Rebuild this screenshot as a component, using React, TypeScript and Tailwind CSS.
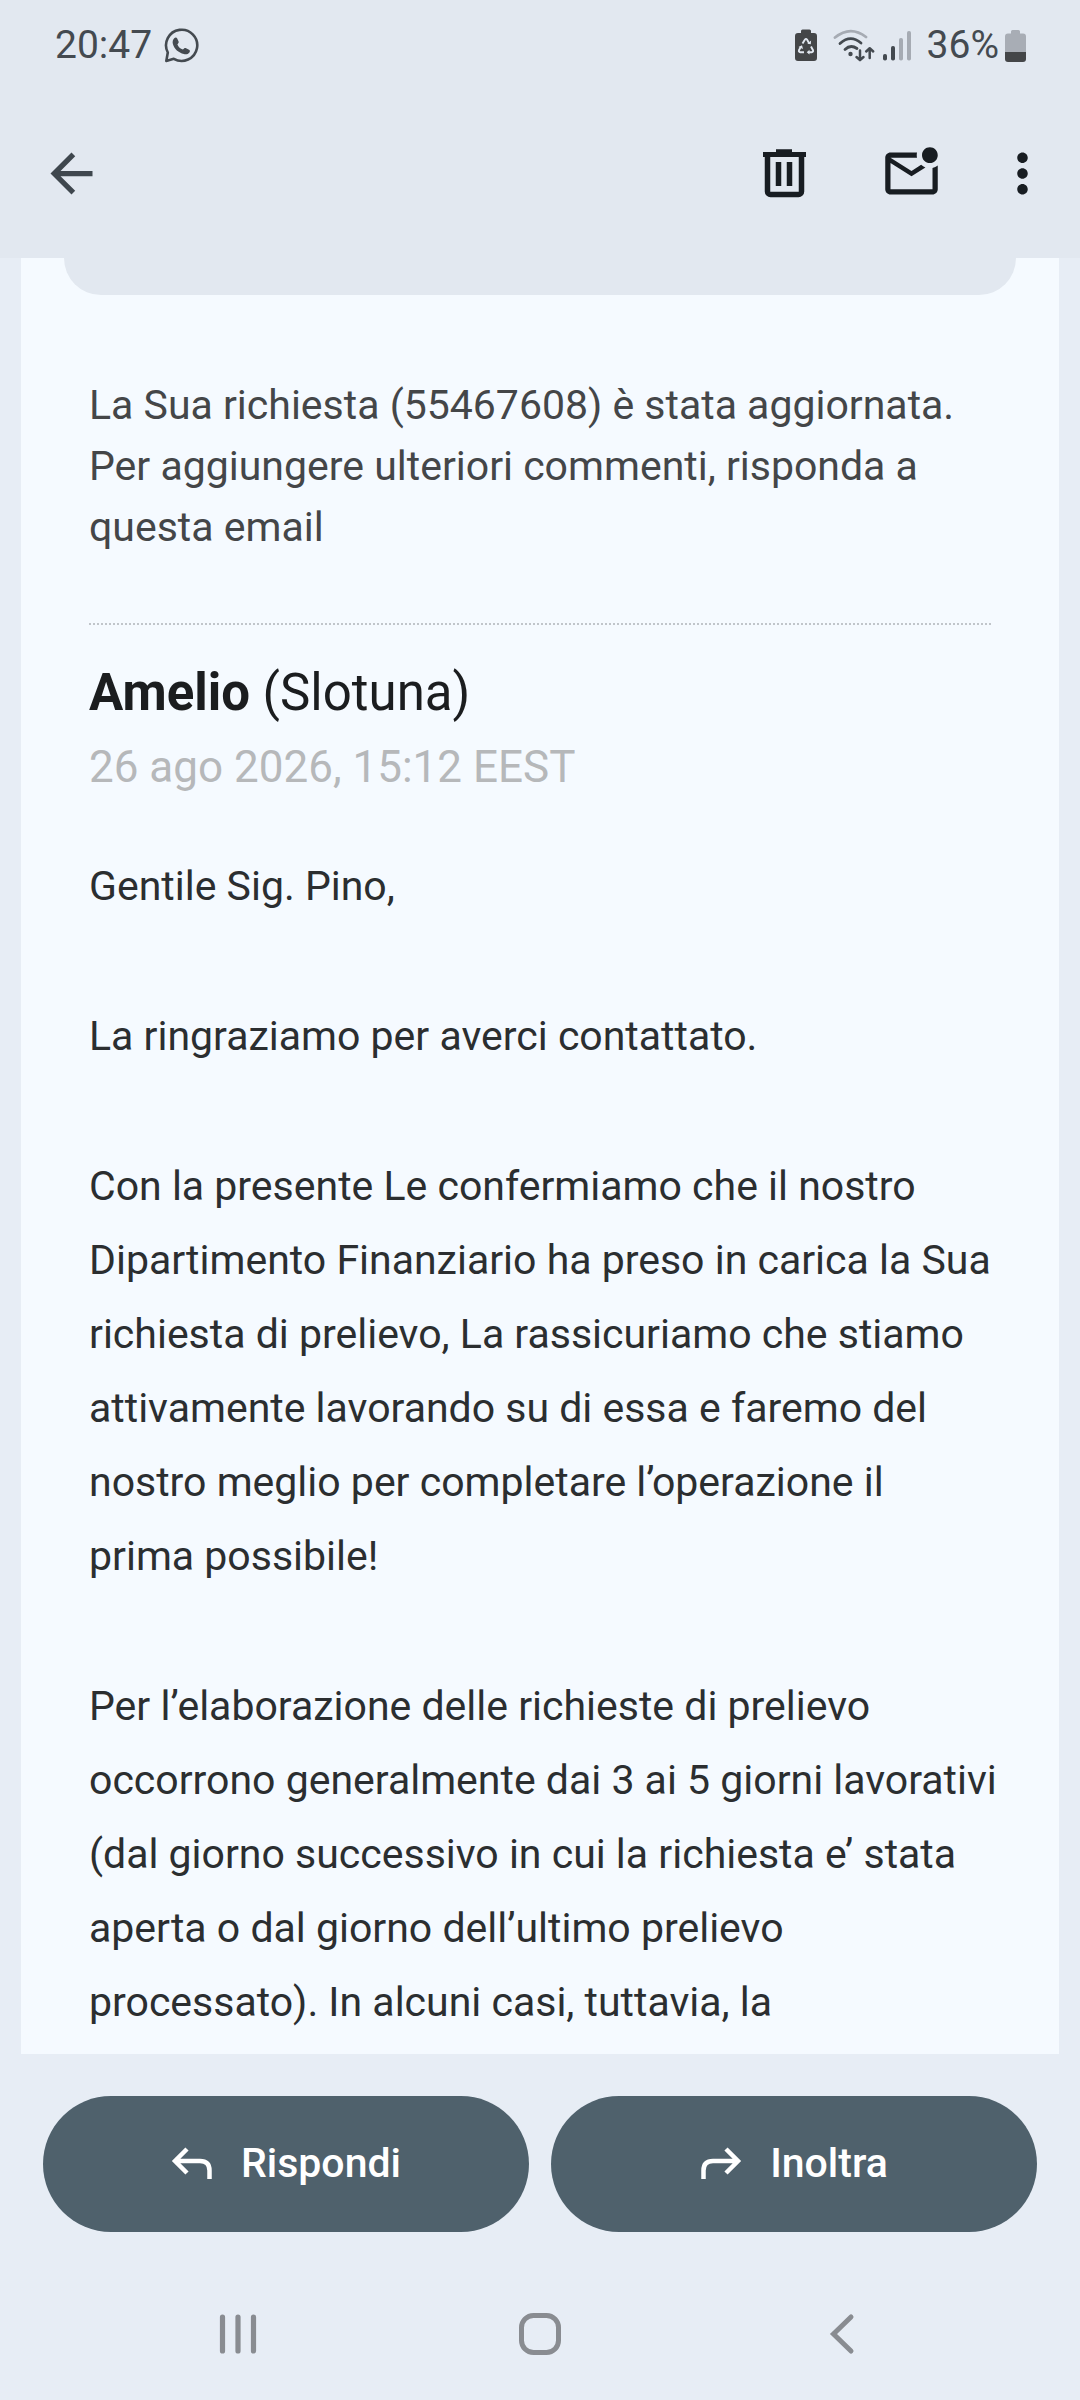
import React from 'react'

const intro = 'La Sua richiesta (55467608) è stata aggiornata. Per aggiungere ulteriori commenti, risponda a questa email'

const paragraphs = [
  'Gentile Sig. Pino,',
  'La ringraziamo per averci contattato.',
  'Con la presente Le confermiamo che il nostro Dipartimento Finanziario ha preso in carica la Sua richiesta di prelievo, La rassicuriamo che stiamo attivamente lavorando su di essa e faremo del nostro meglio per completare l’operazione il\nprima possibile!',
  'Per l’elaborazione delle richieste di prelievo occorrono generalmente dai 3 ai 5 giorni lavorativi (dal giorno successivo in cui la richiesta e’ stata aperta o dal giorno dell’ultimo prelievo processato). In alcuni casi, tuttavia, la',
]

function WhatsAppIcon() {
  return (
    <svg width="36" height="36" viewBox="0 0 36 36" fill="none">
      <path d="M2.300 34l1.500-8.500A15.600 15.600 0 1 1 9.800 31.800z" stroke="#444a50" strokeWidth="2.600" strokeLinejoin="round" />
      <path
        d="M10.200 11.200c1-1 2.500-1 3 .2l1.400 3.200c.4 1-.1 1.700-1.200 2.800 1 2.400 3 4.300 5.500 5.200 1.200-1.400 1.800-1.900 2.700-1.500l3.400 1.600c1.200.6 1.100 1.700.4 2.700-1.100 1.600-3.400 2.200-5.500 1.700-5.400-1.300-9.700-5-11-10-.6-2.300-.1-4.500 1.300-5.900z"
        fill="#444a50"
      />
    </svg>
  )
}

function PowerSavingIcon() {
  return (
    <svg width="22" height="33" viewBox="0 0 22 33" fill="none">
      <path d="M6 2a1.500 1.500 0 0 1 1.500-1.500h7A1.500 1.500 0 0 1 16 2v2h3a3 3 0 0 1 3 3v22a3 3 0 0 1-3 3H3a3 3 0 0 1-3-3V7a3 3 0 0 1 3-3h3z" fill="#444648" />
      <path d="M7.500 14.500L10 10.500q1-1.300 2 0l2 3.500M16 17.500l2 3.700q.6 1.800-1.300 2H13.500M9 23.200H5.300q-1.900-.2-1.300-2l1.800-3.500" stroke="#e2e8f0" strokeWidth="1.900" />
      <path d="M12.300 14.800l3.500.4.300-3.600zM14.500 20.800v4.800L11.700 23.200zM3.500 18l3.500-1.700 1 3.700z" fill="#e2e8f0" />
    </svg>
  )
}

function WifiIcon() {
  return (
    <svg width="42" height="33" viewBox="0 0 42 33" fill="none" strokeLinecap="round">
      <path d="M2 8.500Q17.500-4 33 8" stroke="#a6abb3" strokeWidth="2.800" />
      <path d="M7 14.500Q17.500 5 28 14M12 20.500Q17.500 15 24 19.500" stroke="#444a50" strokeWidth="2.800" />
      <circle cx="17.500" cy="25" r="2.200" fill="#444a50" />
      <path d="M27 21.500v9M23.500 28l3.500 3.200 3.500-3.200M36.700 29V19.500M33.200 22.500l3.500-3.300 3.500 3.300" stroke="#444a50" strokeWidth="2.500" strokeLinejoin="round" />
    </svg>
  )
}

function SignalIcon() {
  return (
    <svg width="28" height="33" viewBox="0 0 28 33" fill="#444a50">
      <rect x="0" y="25" width="4" height="6.500" rx="1.800" />
      <rect x="8" y="17" width="4" height="14.500" rx="1.800" />
      <g fill="#a6abb3">
        <rect x="16" y="9" width="4" height="22.500" rx="1.800" />
        <rect x="24" y="2" width="4" height="29.500" rx="1.800" />
      </g>
    </svg>
  )
}

function BatteryIcon() {
  return (
    <svg width="21" height="33" viewBox="0 0 21 33">
      <path d="M6 2.500A1.500 1.500 0 0 1 7.500 1h6A1.500 1.500 0 0 1 15 2.500V4.500h3a3 3 0 0 1 3 3V24H0V7.500a3 3 0 0 1 3-3h3z" fill="#a8adb5" />
      <path d="M0 23h21v7a3 3 0 0 1-3 3H3a3 3 0 0 1-3-3z" fill="#444648" />
    </svg>
  )
}

function StatusBar() {
  return (
    <div className="flex h-[88px] items-center justify-between pl-[55px] pr-[54px] pt-[2px] text-[39px] text-[#444a50]">
      <div className="flex items-center gap-3">
        <span>20:47</span>
        <WhatsAppIcon />
      </div>
      <div className="flex items-center">
        <PowerSavingIcon />
        <span className="ml-4 flex gap-2">
          <WifiIcon />
          <SignalIcon />
        </span>
        <span className="ml-4 mr-[6px]">36%</span>
        <BatteryIcon />
      </div>
    </div>
  )
}

function Toolbar() {
  return (
    <div className="flex h-[170px] items-center justify-between pl-10 pr-[26px] text-[#181d22]">
      <button aria-label="Indietro" className="text-[#3f474e]">
        <svg width="63" height="63" viewBox="0 0 24 24" fill="currentColor">
          <path d="M20 11H7.830l5.590-5.590L12 4l-8 8 8 8 1.410-1.410L7.830 13H20v-2z" />
        </svg>
      </button>
      <div className="flex items-center">
        <button aria-label="Elimina">
          <svg width="63" height="63" viewBox="0 0 63 63" fill="none" stroke="currentColor">
            <path d="M12.500 12V49.500a3 3 0 0 0 3 3H43.500a3 3 0 0 0 3-3V12" strokeWidth="5.500" />
            <path d="M8 12.500h43M21 9.800h16" strokeWidth="5.200" />
            <path d="M23.500 20v24M34.500 20v24" strokeWidth="5.500" />
          </svg>
        </button>
        <button aria-label="Segna come da leggere" className="ml-[62px]">
          <svg width="63" height="63" viewBox="0 0 24 24" fill="currentColor">
            <path d="M22 8.980V18c0 1.100-.9 2-2 2H4c-1.100 0-2-.9-2-2V6c0-1.100.9-2 2-2h10.100c-.06.320-.1.660-.1 1s.04.680.1 1H4l8 5 3.670-2.290c.470.430 1.020.760 1.630.980L12 13 4 8v10h16V9.900c.740-.150 1.420-.480 2-.920zM16 5c0 1.660 1.340 3 3 3s3-1.340 3-3-1.340-3-3-3-3 1.340-3 3z" />
          </svg>
        </button>
        <button aria-label="Altre opzioni" className="ml-[48px]">
          <svg width="63" height="63" viewBox="0 0 24 24" fill="currentColor">
            <path d="M12 8c1.100 0 2-.9 2-2s-.9-2-2-2-2 .9-2 2 .9 2 2 2zm0 2c-1.100 0-2 .9-2 2s.9 2 2 2 2-.9 2-2-.9-2-2-2zm0 6c-1.100 0-2 .9-2 2s.9 2 2 2 2-.9 2-2-.9-2-2-2z" />
          </svg>
        </button>
      </div>
    </div>
  )
}

function Message() {
  return (
    <main className="mx-[21px] bg-[#f5faff]">
      <div className="mx-[43px] h-[37px] rounded-b-[40px] bg-[#e2e8f0]" />
      <article className="pb-[15px] pl-[68px] pr-12 pt-20">
        <p className="text-[41px] leading-[61px] text-[#444648]">{intro}</p>
        <hr className="mr-5 mt-[65px] border-t-2 border-dotted border-[#c0c5ca]" />
        <h1 className="mt-8 text-[51px] leading-[72px] text-[#1b1d1f]">
          <strong>Amelio</strong> (Slotuna)
        </h1>
        <p className="text-[44px] leading-[76px] text-[#b6b8ba]">26 ago 2026, 15:12 EEST</p>
        <div className="mt-11 flex flex-col gap-[76px] whitespace-pre-line text-[41px] leading-[74px] text-[#2b2e30]">
          {paragraphs.map((text) => (
            <p key={text}>{text}</p>
          ))}
        </div>
      </article>
    </main>
  )
}

function Actions() {
  return (
    <div className="flex gap-[22px] px-[43px] pt-[42px] text-[41px] font-medium text-white">
      <button className="flex h-[136px] flex-1 items-center justify-center gap-7 rounded-full bg-[#4f616c]">
        <svg width="42" height="34" viewBox="0 0 42 34" fill="none" stroke="currentColor" strokeWidth="4.500">
          <path d="M16 2L4 14l12 12M4 14h25q9.500 0 9.500 9.500V32" />
        </svg>
        Rispondi
      </button>
      <button className="flex h-[136px] flex-1 items-center justify-center gap-7 rounded-full bg-[#4f616c]">
        <svg width="42" height="34" viewBox="0 0 42 34" fill="none" stroke="currentColor" strokeWidth="4.500">
          <path d="M26 2l12 12-12 12M38 14H13q-9.500 0-9.500 9.500V32" />
        </svg>
        Inoltra
      </button>
    </div>
  )
}

function NavBar() {
  return (
    <nav className="grid h-[168px] grid-cols-3 items-center justify-items-center px-[87px] pt-[36px] text-[#898c91]">
      <button aria-label="Recenti">
        <svg width="44" height="44" viewBox="0 0 44 44" fill="none" stroke="currentColor" strokeWidth="5.200" strokeLinecap="round">
          <path d="M6.500 5v34M22 5v34M37.500 5v34" />
        </svg>
      </button>
      <button aria-label="Home">
        <svg width="44" height="44" viewBox="0 0 44 44" fill="none" stroke="currentColor" strokeWidth="5">
          <rect x="3.500" y="3.500" width="37" height="37" rx="12" />
        </svg>
      </button>
      <button aria-label="Indietro">
        <svg width="44" height="44" viewBox="0 0 44 44" fill="none" stroke="currentColor" strokeWidth="5" strokeLinecap="round">
          <path d="M31 5L13.500 22 31 39" />
        </svg>
      </button>
    </nav>
  )
}

export default function App() {
  return (
    <div className="min-h-screen bg-[#e7edf5] font-[Roboto,sans-serif]">
      <header className="bg-[#e2e8f0]">
        <StatusBar />
        <Toolbar />
      </header>
      <Message />
      <Actions />
      <NavBar />
    </div>
  )
}
